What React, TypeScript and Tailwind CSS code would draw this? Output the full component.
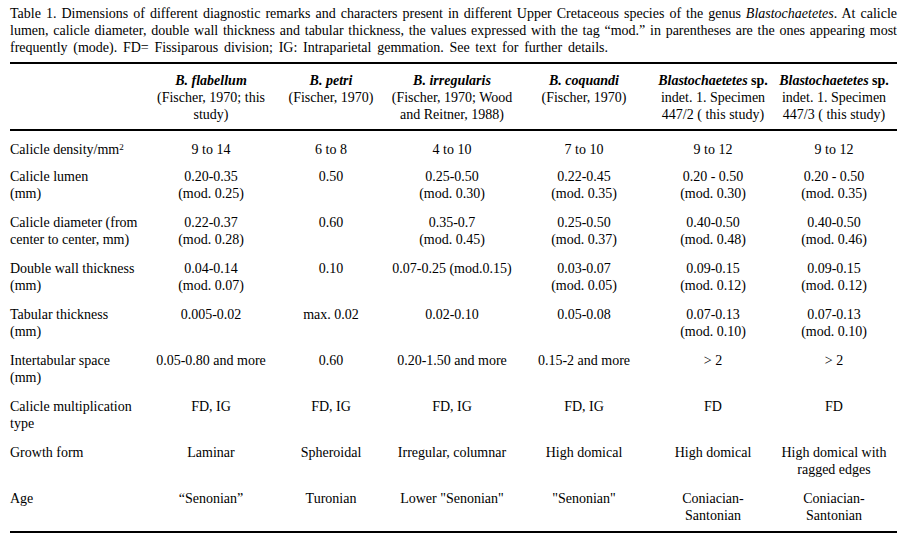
const COLS = 'grid grid-cols-[141px_120px_120px_122px_142px_116px_126px]'

type Row = { label: React.ReactNode; cells: React.ReactNode[]; pad?: string }

const rows: Row[] = [
  {
    label: (
      <>
        Calicle density/mm<sup className="text-[9px] leading-none">2</sup>
      </>
    ),
    cells: ['9 to 14', '6 to 8', '4 to 10', '7 to 10', '9 to 12', '9 to 12'],
    pad: 'pb-[10px]',
  },
  {
    label: <>Calicle lumen<br />(mm)</>,
    cells: [
      <>0.20-0.35<br />(mod. 0.25)</>,
      '0.50',
      <>0.25-0.50<br />(mod. 0.30)</>,
      <>0.22-0.45<br />(mod. 0.35)</>,
      <>0.20 - 0.50<br />(mod. 0.30)</>,
      <>0.20 - 0.50<br />(mod. 0.35)</>,
    ],
  },
  {
    label: <>Calicle diameter (from<br />center to center, mm)</>,
    cells: [
      <>0.22-0.37<br />(mod. 0.28)</>,
      '0.60',
      <>0.35-0.7<br />(mod. 0.45)</>,
      <>0.25-0.50<br />(mod. 0.37)</>,
      <>0.40-0.50<br />(mod. 0.48)</>,
      <>0.40-0.50<br />(mod. 0.46)</>,
    ],
  },
  {
    label: <>Double wall thickness<br />(mm)</>,
    cells: [
      <>0.04-0.14<br />(mod. 0.07)</>,
      '0.10',
      '0.07-0.25 (mod.0.15)',
      <>0.03-0.07<br />(mod. 0.05)</>,
      <>0.09-0.15<br />(mod. 0.12)</>,
      <>0.09-0.15<br />(mod. 0.12)</>,
    ],
  },
  {
    label: <>Tabular thickness<br />(mm)</>,
    cells: [
      '0.005-0.02',
      'max. 0.02',
      '0.02-0.10',
      '0.05-0.08',
      <>0.07-0.13<br />(mod. 0.10)</>,
      <>0.07-0.13<br />(mod. 0.10)</>,
    ],
  },
  {
    label: <>Intertabular space<br />(mm)</>,
    cells: ['0.05-0.80 and more', '0.60', '0.20-1.50 and more', '0.15-2 and more', '> 2', '> 2'],
  },
  {
    label: <>Calicle multiplication<br />type</>,
    cells: ['FD, IG', 'FD, IG', 'FD, IG', 'FD, IG', 'FD', 'FD'],
  },
  {
    label: 'Growth form',
    cells: ['Laminar', 'Spheroidal', 'Irregular, columnar', 'High domical', 'High domical', <>High domical with<br />ragged edges</>],
  },
  {
    label: 'Age',
    cells: [
      '\u201cSenonian\u201d',
      'Turonian',
      'Lower "Senonian"',
      '"Senonian"',
      <>Coniacian-<br />Santonian</>,
      <>Coniacian-<br />Santonian</>,
    ],
    pad: 'pb-[7px]',
  },
]

const headers: React.ReactNode[] = [
  <><b><i>B. flabellum</i></b><br />(Fischer, 1970; this<br />study)</>,
  <><b><i>B. petri</i></b><br />(Fischer, 1970)</>,
  <><b><i>B. irregularis</i></b><br />(Fischer, 1970; Wood<br />and Reitner, 1988)</>,
  <><b><i>B. coquandi</i></b><br />(Fischer, 1970)</>,
  <><b><i>Blastochaetetes</i> sp.</b><br />indet. 1. Specimen<br />447/2 ( this study)</>,
  <><b><i>Blastochaetetes</i> sp.</b><br />indet. 1. Specimen<br />447/3 ( this study)</>,
]

export default function App() {
  return (
    <div className="h-[544px] w-[911px] bg-white text-[14px] leading-[17px] text-black font-[family-name:Liberation_Serif,serif]">
      <div className="pl-[10px] pt-[5px] w-[897px]">
        <div className="text-justify [text-align-last:justify]">
          Table 1. Dimensions of different diagnostic remarks and characters present in different Upper Cretaceous species of the genus <i>Blastochaetetes</i>. At calicle
        </div>
        <div className="text-justify [text-align-last:justify]">
          lumen, calicle diameter, double wall thickness and tabular thickness, the values expressed with the tag “mod.” in parentheses are the ones appearing most
        </div>
        <div className="w-[598px] text-justify [text-align-last:justify]">
          frequently (mode). FD= Fissiparous division; IG: Intraparietal gemmation. See text for further details.
        </div>

        <div className="mt-[6px] border-t-2 border-black" />
        <div className={`${COLS} pt-[8px] pb-[6px]`}>
          <div />
          {headers.map((h, i) => (
            <div key={i} className="text-center">{h}</div>
          ))}
        </div>
        <div className="border-t-2 border-black" />

        <div className="pt-[10px]">
          {rows.map((r, i) => (
            <div key={i} className={`${COLS} ${r.pad ?? 'pb-[12px]'}`}>
              <div>{r.label}</div>
              {r.cells.map((c, j) => (
                <div key={j} className="text-center">{c}</div>
              ))}
            </div>
          ))}
        </div>
        <div className="border-t-2 border-black" />
      </div>
    </div>
  )
}
